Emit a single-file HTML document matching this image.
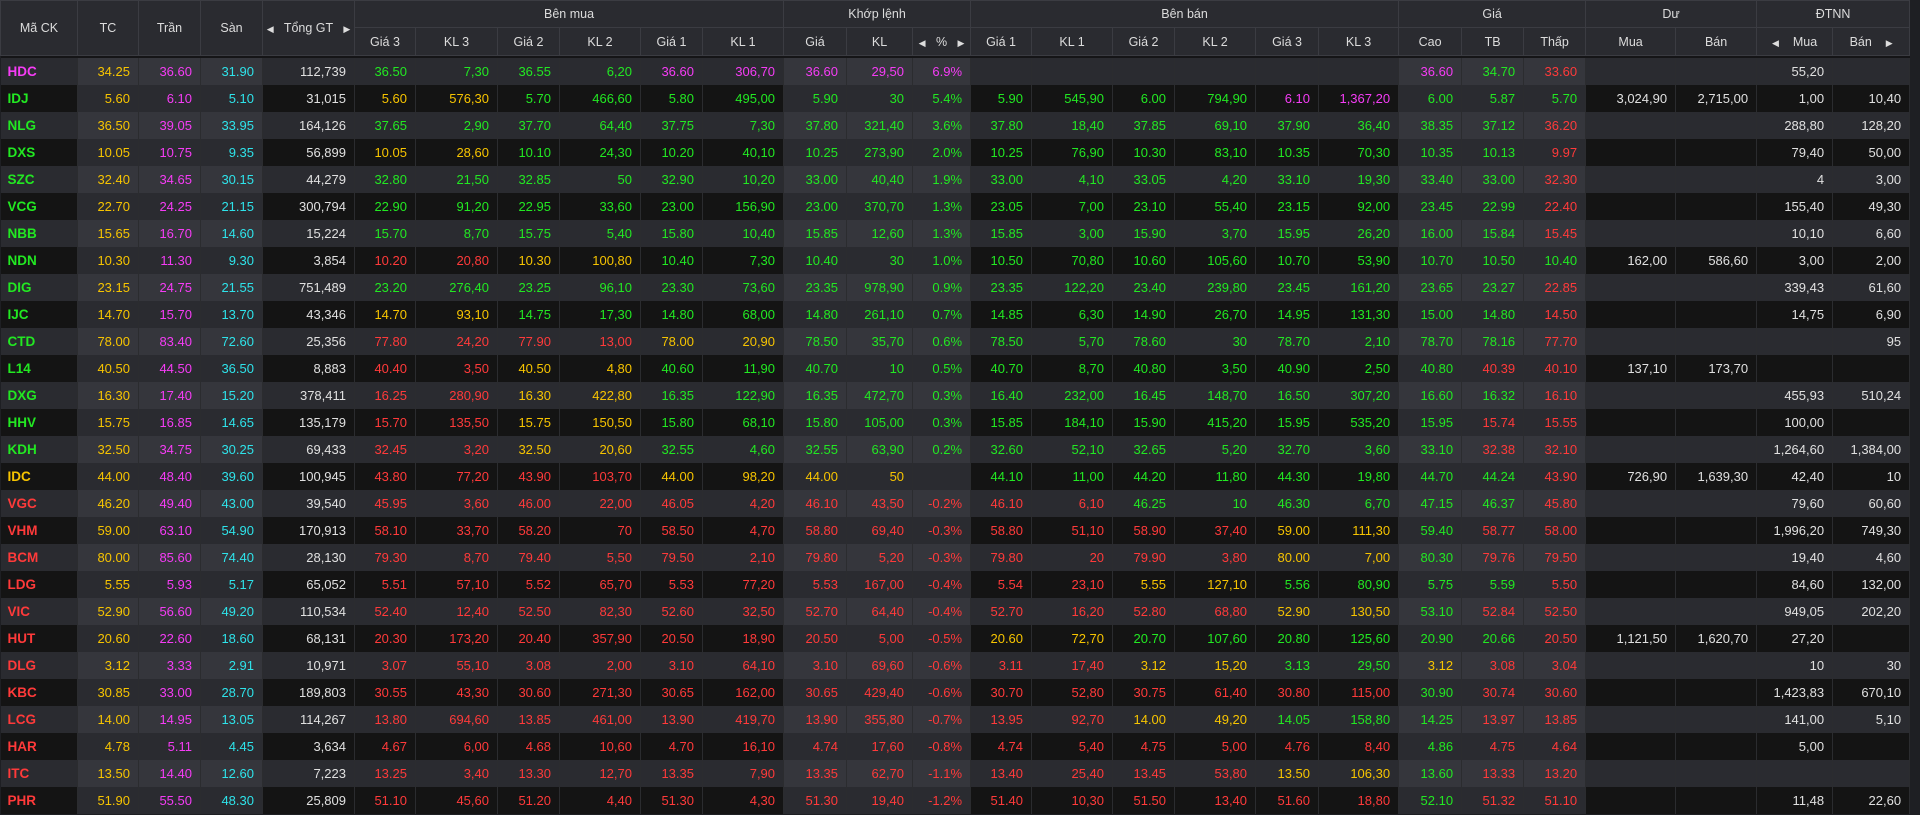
<!DOCTYPE html>
<html><head><meta charset="utf-8">
<style>
html,body{margin:0;padding:0;background:#1e1f23;width:1920px;height:815px;overflow:hidden}
table{border-collapse:collapse;table-layout:fixed;width:1909px;font-family:"Liberation Sans",Arial,sans-serif;font-size:13px}
th{background:#2a2b30;color:#dcdcdc;font-weight:normal;font-size:12.5px;border:1px solid #3b3c42;padding:0;text-align:center}
thead tr.r1 th{height:26px}
thead tr.r2 th{height:27px}
tr.sp td{height:2px;background:#151517;padding:0;border:0}
tbody td{height:27px;padding:0 8px 0 0;text-align:right;white-space:nowrap;overflow:hidden;color:#e0e0e0;border-right:1px solid rgba(255,255,255,0.06)}
tbody tr.d:nth-child(even) td{background:#2a2b30}
tbody tr.d:nth-child(even) td.h{background:#35363c}
tbody tr.d:nth-child(odd) td{background:#141414}
tbody tr.d:nth-child(odd) td.h{background:#2a2b30}
tbody td:first-child{text-align:left;padding-left:7px;font-weight:bold;font-size:13.5px}
.g{color:#22e822!important}.y{color:#f7c400!important}.m{color:#f53cf5!important}.c{color:#2ee3ea!important}.r{color:#ff3a3a!important}
.ar{font-size:9px;color:#ddd}
</style></head><body>
<table id="t">
<colgroup>
<col style="width:77px"><col style="width:61px"><col style="width:62px"><col style="width:62px"><col style="width:92px">
<col style="width:61px"><col style="width:82px"><col style="width:62px"><col style="width:81px"><col style="width:62px"><col style="width:81px">
<col style="width:63px"><col style="width:66px"><col style="width:58px">
<col style="width:61px"><col style="width:81px"><col style="width:62px"><col style="width:81px"><col style="width:63px"><col style="width:80px">
<col style="width:63px"><col style="width:62px"><col style="width:62px">
<col style="width:90px"><col style="width:81px"><col style="width:76px"><col style="width:77px">
</colgroup>
<thead>
<tr class="r1"><th rowspan="2">Mã CK</th><th rowspan="2">TC</th><th rowspan="2">Trần</th><th rowspan="2">Sàn</th><th rowspan="2"><span class="ar">◀</span>&nbsp;&nbsp; Tổng GT &nbsp;&nbsp;<span class="ar">▶</span></th>
<th colspan="6">Bên mua</th><th colspan="3">Khớp lệnh</th><th colspan="6">Bên bán</th><th colspan="3">Giá</th><th colspan="2">Dư</th><th colspan="2">ĐTNN</th></tr>
<tr class="r2"><th>Giá 3</th><th>KL 3</th><th>Giá 2</th><th>KL 2</th><th>Giá 1</th><th>KL 1</th><th>Giá</th><th>KL</th><th><span class="ar">◀</span>&nbsp;&nbsp; % &nbsp;&nbsp;<span class="ar">▶</span></th>
<th>Giá 1</th><th>KL 1</th><th>Giá 2</th><th>KL 2</th><th>Giá 3</th><th>KL 3</th><th>Cao</th><th>TB</th><th>Thấp</th><th>Mua</th><th>Bán</th><th><span class="ar">◀</span>&nbsp;&nbsp;&nbsp; Mua</th><th>Bán &nbsp;&nbsp;&nbsp;<span class="ar">▶</span></th></tr>
</thead>
<tbody>
<tr class="sp"><td colspan="27"></td></tr>
<tr class="d"><td>HDC</td><td>34.25</td><td>36.60</td><td>31.90</td><td>112,739</td><td>36.50</td><td>7,30</td><td>36.55</td><td>6,20</td><td>36.60</td><td>306,70</td><td>36.60</td><td>29,50</td><td>6.9%</td><td></td><td></td><td></td><td></td><td></td><td></td><td>36.60</td><td>34.70</td><td>33.60</td><td></td><td></td><td>55,20</td><td></td></tr>
<tr class="d"><td>IDJ</td><td>5.60</td><td>6.10</td><td>5.10</td><td>31,015</td><td>5.60</td><td>576,30</td><td>5.70</td><td>466,60</td><td>5.80</td><td>495,00</td><td>5.90</td><td>30</td><td>5.4%</td><td>5.90</td><td>545,90</td><td>6.00</td><td>794,90</td><td>6.10</td><td>1,367,20</td><td>6.00</td><td>5.87</td><td>5.70</td><td>3,024,90</td><td>2,715,00</td><td>1,00</td><td>10,40</td></tr>
<tr class="d"><td>NLG</td><td>36.50</td><td>39.05</td><td>33.95</td><td>164,126</td><td>37.65</td><td>2,90</td><td>37.70</td><td>64,40</td><td>37.75</td><td>7,30</td><td>37.80</td><td>321,40</td><td>3.6%</td><td>37.80</td><td>18,40</td><td>37.85</td><td>69,10</td><td>37.90</td><td>36,40</td><td>38.35</td><td>37.12</td><td>36.20</td><td></td><td></td><td>288,80</td><td>128,20</td></tr>
<tr class="d"><td>DXS</td><td>10.05</td><td>10.75</td><td>9.35</td><td>56,899</td><td>10.05</td><td>28,60</td><td>10.10</td><td>24,30</td><td>10.20</td><td>40,10</td><td>10.25</td><td>273,90</td><td>2.0%</td><td>10.25</td><td>76,90</td><td>10.30</td><td>83,10</td><td>10.35</td><td>70,30</td><td>10.35</td><td>10.13</td><td>9.97</td><td></td><td></td><td>79,40</td><td>50,00</td></tr>
<tr class="d"><td>SZC</td><td>32.40</td><td>34.65</td><td>30.15</td><td>44,279</td><td>32.80</td><td>21,50</td><td>32.85</td><td>50</td><td>32.90</td><td>10,20</td><td>33.00</td><td>40,40</td><td>1.9%</td><td>33.00</td><td>4,10</td><td>33.05</td><td>4,20</td><td>33.10</td><td>19,30</td><td>33.40</td><td>33.00</td><td>32.30</td><td></td><td></td><td>4</td><td>3,00</td></tr>
<tr class="d"><td>VCG</td><td>22.70</td><td>24.25</td><td>21.15</td><td>300,794</td><td>22.90</td><td>91,20</td><td>22.95</td><td>33,60</td><td>23.00</td><td>156,90</td><td>23.00</td><td>370,70</td><td>1.3%</td><td>23.05</td><td>7,00</td><td>23.10</td><td>55,40</td><td>23.15</td><td>92,00</td><td>23.45</td><td>22.99</td><td>22.40</td><td></td><td></td><td>155,40</td><td>49,30</td></tr>
<tr class="d"><td>NBB</td><td>15.65</td><td>16.70</td><td>14.60</td><td>15,224</td><td>15.70</td><td>8,70</td><td>15.75</td><td>5,40</td><td>15.80</td><td>10,40</td><td>15.85</td><td>12,60</td><td>1.3%</td><td>15.85</td><td>3,00</td><td>15.90</td><td>3,70</td><td>15.95</td><td>26,20</td><td>16.00</td><td>15.84</td><td>15.45</td><td></td><td></td><td>10,10</td><td>6,60</td></tr>
<tr class="d"><td>NDN</td><td>10.30</td><td>11.30</td><td>9.30</td><td>3,854</td><td>10.20</td><td>20,80</td><td>10.30</td><td>100,80</td><td>10.40</td><td>7,30</td><td>10.40</td><td>30</td><td>1.0%</td><td>10.50</td><td>70,80</td><td>10.60</td><td>105,60</td><td>10.70</td><td>53,90</td><td>10.70</td><td>10.50</td><td>10.40</td><td>162,00</td><td>586,60</td><td>3,00</td><td>2,00</td></tr>
<tr class="d"><td>DIG</td><td>23.15</td><td>24.75</td><td>21.55</td><td>751,489</td><td>23.20</td><td>276,40</td><td>23.25</td><td>96,10</td><td>23.30</td><td>73,60</td><td>23.35</td><td>978,90</td><td>0.9%</td><td>23.35</td><td>122,20</td><td>23.40</td><td>239,80</td><td>23.45</td><td>161,20</td><td>23.65</td><td>23.27</td><td>22.85</td><td></td><td></td><td>339,43</td><td>61,60</td></tr>
<tr class="d"><td>IJC</td><td>14.70</td><td>15.70</td><td>13.70</td><td>43,346</td><td>14.70</td><td>93,10</td><td>14.75</td><td>17,30</td><td>14.80</td><td>68,00</td><td>14.80</td><td>261,10</td><td>0.7%</td><td>14.85</td><td>6,30</td><td>14.90</td><td>26,70</td><td>14.95</td><td>131,30</td><td>15.00</td><td>14.80</td><td>14.50</td><td></td><td></td><td>14,75</td><td>6,90</td></tr>
<tr class="d"><td>CTD</td><td>78.00</td><td>83.40</td><td>72.60</td><td>25,356</td><td>77.80</td><td>24,20</td><td>77.90</td><td>13,00</td><td>78.00</td><td>20,90</td><td>78.50</td><td>35,70</td><td>0.6%</td><td>78.50</td><td>5,70</td><td>78.60</td><td>30</td><td>78.70</td><td>2,10</td><td>78.70</td><td>78.16</td><td>77.70</td><td></td><td></td><td></td><td>95</td></tr>
<tr class="d"><td>L14</td><td>40.50</td><td>44.50</td><td>36.50</td><td>8,883</td><td>40.40</td><td>3,50</td><td>40.50</td><td>4,80</td><td>40.60</td><td>11,90</td><td>40.70</td><td>10</td><td>0.5%</td><td>40.70</td><td>8,70</td><td>40.80</td><td>3,50</td><td>40.90</td><td>2,50</td><td>40.80</td><td>40.39</td><td>40.10</td><td>137,10</td><td>173,70</td><td></td><td></td></tr>
<tr class="d"><td>DXG</td><td>16.30</td><td>17.40</td><td>15.20</td><td>378,411</td><td>16.25</td><td>280,90</td><td>16.30</td><td>422,80</td><td>16.35</td><td>122,90</td><td>16.35</td><td>472,70</td><td>0.3%</td><td>16.40</td><td>232,00</td><td>16.45</td><td>148,70</td><td>16.50</td><td>307,20</td><td>16.60</td><td>16.32</td><td>16.10</td><td></td><td></td><td>455,93</td><td>510,24</td></tr>
<tr class="d"><td>HHV</td><td>15.75</td><td>16.85</td><td>14.65</td><td>135,179</td><td>15.70</td><td>135,50</td><td>15.75</td><td>150,50</td><td>15.80</td><td>68,10</td><td>15.80</td><td>105,00</td><td>0.3%</td><td>15.85</td><td>184,10</td><td>15.90</td><td>415,20</td><td>15.95</td><td>535,20</td><td>15.95</td><td>15.74</td><td>15.55</td><td></td><td></td><td>100,00</td><td></td></tr>
<tr class="d"><td>KDH</td><td>32.50</td><td>34.75</td><td>30.25</td><td>69,433</td><td>32.45</td><td>3,20</td><td>32.50</td><td>20,60</td><td>32.55</td><td>4,60</td><td>32.55</td><td>63,90</td><td>0.2%</td><td>32.60</td><td>52,10</td><td>32.65</td><td>5,20</td><td>32.70</td><td>3,60</td><td>33.10</td><td>32.38</td><td>32.10</td><td></td><td></td><td>1,264,60</td><td>1,384,00</td></tr>
<tr class="d"><td>IDC</td><td>44.00</td><td>48.40</td><td>39.60</td><td>100,945</td><td>43.80</td><td>77,20</td><td>43.90</td><td>103,70</td><td>44.00</td><td>98,20</td><td>44.00</td><td>50</td><td></td><td>44.10</td><td>11,00</td><td>44.20</td><td>11,80</td><td>44.30</td><td>19,80</td><td>44.70</td><td>44.24</td><td>43.90</td><td>726,90</td><td>1,639,30</td><td>42,40</td><td>10</td></tr>
<tr class="d"><td>VGC</td><td>46.20</td><td>49.40</td><td>43.00</td><td>39,540</td><td>45.95</td><td>3,60</td><td>46.00</td><td>22,00</td><td>46.05</td><td>4,20</td><td>46.10</td><td>43,50</td><td>-0.2%</td><td>46.10</td><td>6,10</td><td>46.25</td><td>10</td><td>46.30</td><td>6,70</td><td>47.15</td><td>46.37</td><td>45.80</td><td></td><td></td><td>79,60</td><td>60,60</td></tr>
<tr class="d"><td>VHM</td><td>59.00</td><td>63.10</td><td>54.90</td><td>170,913</td><td>58.10</td><td>33,70</td><td>58.20</td><td>70</td><td>58.50</td><td>4,70</td><td>58.80</td><td>69,40</td><td>-0.3%</td><td>58.80</td><td>51,10</td><td>58.90</td><td>37,40</td><td>59.00</td><td>111,30</td><td>59.40</td><td>58.77</td><td>58.00</td><td></td><td></td><td>1,996,20</td><td>749,30</td></tr>
<tr class="d"><td>BCM</td><td>80.00</td><td>85.60</td><td>74.40</td><td>28,130</td><td>79.30</td><td>8,70</td><td>79.40</td><td>5,50</td><td>79.50</td><td>2,10</td><td>79.80</td><td>5,20</td><td>-0.3%</td><td>79.80</td><td>20</td><td>79.90</td><td>3,80</td><td>80.00</td><td>7,00</td><td>80.30</td><td>79.76</td><td>79.50</td><td></td><td></td><td>19,40</td><td>4,60</td></tr>
<tr class="d"><td>LDG</td><td>5.55</td><td>5.93</td><td>5.17</td><td>65,052</td><td>5.51</td><td>57,10</td><td>5.52</td><td>65,70</td><td>5.53</td><td>77,20</td><td>5.53</td><td>167,00</td><td>-0.4%</td><td>5.54</td><td>23,10</td><td>5.55</td><td>127,10</td><td>5.56</td><td>80,90</td><td>5.75</td><td>5.59</td><td>5.50</td><td></td><td></td><td>84,60</td><td>132,00</td></tr>
<tr class="d"><td>VIC</td><td>52.90</td><td>56.60</td><td>49.20</td><td>110,534</td><td>52.40</td><td>12,40</td><td>52.50</td><td>82,30</td><td>52.60</td><td>32,50</td><td>52.70</td><td>64,40</td><td>-0.4%</td><td>52.70</td><td>16,20</td><td>52.80</td><td>68,80</td><td>52.90</td><td>130,50</td><td>53.10</td><td>52.84</td><td>52.50</td><td></td><td></td><td>949,05</td><td>202,20</td></tr>
<tr class="d"><td>HUT</td><td>20.60</td><td>22.60</td><td>18.60</td><td>68,131</td><td>20.30</td><td>173,20</td><td>20.40</td><td>357,90</td><td>20.50</td><td>18,90</td><td>20.50</td><td>5,00</td><td>-0.5%</td><td>20.60</td><td>72,70</td><td>20.70</td><td>107,60</td><td>20.80</td><td>125,60</td><td>20.90</td><td>20.66</td><td>20.50</td><td>1,121,50</td><td>1,620,70</td><td>27,20</td><td></td></tr>
<tr class="d"><td>DLG</td><td>3.12</td><td>3.33</td><td>2.91</td><td>10,971</td><td>3.07</td><td>55,10</td><td>3.08</td><td>2,00</td><td>3.10</td><td>64,10</td><td>3.10</td><td>69,60</td><td>-0.6%</td><td>3.11</td><td>17,40</td><td>3.12</td><td>15,20</td><td>3.13</td><td>29,50</td><td>3.12</td><td>3.08</td><td>3.04</td><td></td><td></td><td>10</td><td>30</td></tr>
<tr class="d"><td>KBC</td><td>30.85</td><td>33.00</td><td>28.70</td><td>189,803</td><td>30.55</td><td>43,30</td><td>30.60</td><td>271,30</td><td>30.65</td><td>162,00</td><td>30.65</td><td>429,40</td><td>-0.6%</td><td>30.70</td><td>52,80</td><td>30.75</td><td>61,40</td><td>30.80</td><td>115,00</td><td>30.90</td><td>30.74</td><td>30.60</td><td></td><td></td><td>1,423,83</td><td>670,10</td></tr>
<tr class="d"><td>LCG</td><td>14.00</td><td>14.95</td><td>13.05</td><td>114,267</td><td>13.80</td><td>694,60</td><td>13.85</td><td>461,00</td><td>13.90</td><td>419,70</td><td>13.90</td><td>355,80</td><td>-0.7%</td><td>13.95</td><td>92,70</td><td>14.00</td><td>49,20</td><td>14.05</td><td>158,80</td><td>14.25</td><td>13.97</td><td>13.85</td><td></td><td></td><td>141,00</td><td>5,10</td></tr>
<tr class="d"><td>HAR</td><td>4.78</td><td>5.11</td><td>4.45</td><td>3,634</td><td>4.67</td><td>6,00</td><td>4.68</td><td>10,60</td><td>4.70</td><td>16,10</td><td>4.74</td><td>17,60</td><td>-0.8%</td><td>4.74</td><td>5,40</td><td>4.75</td><td>5,00</td><td>4.76</td><td>8,40</td><td>4.86</td><td>4.75</td><td>4.64</td><td></td><td></td><td>5,00</td><td></td></tr>
<tr class="d"><td>ITC</td><td>13.50</td><td>14.40</td><td>12.60</td><td>7,223</td><td>13.25</td><td>3,40</td><td>13.30</td><td>12,70</td><td>13.35</td><td>7,90</td><td>13.35</td><td>62,70</td><td>-1.1%</td><td>13.40</td><td>25,40</td><td>13.45</td><td>53,80</td><td>13.50</td><td>106,30</td><td>13.60</td><td>13.33</td><td>13.20</td><td></td><td></td><td></td><td></td></tr>
<tr class="d"><td>PHR</td><td>51.90</td><td>55.50</td><td>48.30</td><td>25,809</td><td>51.10</td><td>45,60</td><td>51.20</td><td>4,40</td><td>51.30</td><td>4,30</td><td>51.30</td><td>19,40</td><td>-1.2%</td><td>51.40</td><td>10,30</td><td>51.50</td><td>13,40</td><td>51.60</td><td>18,80</td><td>52.10</td><td>51.32</td><td>51.10</td><td></td><td></td><td>11,48</td><td>22,60</td></tr>
</tbody></table>
<script>
(function(){
var rows=document.querySelectorAll('tr.d');
var H=[1,2,3,11,12,13,20,21,22];
var P=[5,7,9,11,14,16,18,20,21,22];
var K={6:5,8:7,10:9,12:11,13:11,15:14,17:16,19:18,0:11};
rows.forEach(function(r){
var c=r.children;
var tc=parseFloat(c[1].textContent),tr=parseFloat(c[2].textContent),sn=parseFloat(c[3].textContent);
function col(t){var v=parseFloat(t);if(isNaN(v))return '';
if(Math.abs(v-tr)<1e-6)return 'm';if(Math.abs(v-sn)<1e-6)return 'c';if(Math.abs(v-tc)<1e-6)return 'y';return v>tc?'g':'r';}
H.forEach(function(i){c[i].classList.add('h');});
c[1].classList.add('y');c[2].classList.add('m');c[3].classList.add('c');
var pc={};
P.forEach(function(i){var k=col(c[i].textContent);pc[i]=k;if(k)c[i].classList.add(k);});
for(var i in K){var k=pc[K[i]];if(k)c[i].classList.add(k);}
});
})();
</script>
</body></html>
